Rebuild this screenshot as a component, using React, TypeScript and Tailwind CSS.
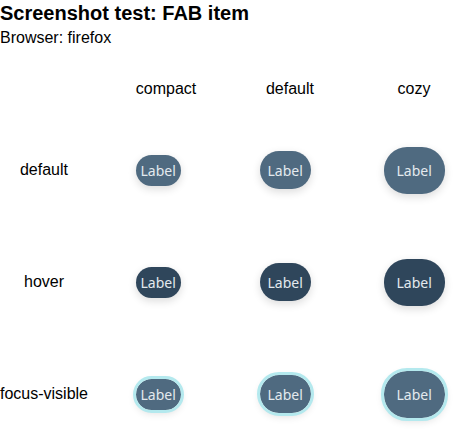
import React from "react";

type Size = "compact" | "default" | "cozy";
type State = "default" | "hover" | "focus-visible";

const sizeCls: Record<Size, string> = {
  compact: "h-[31px] px-[5px] rounded-full",
  default: "h-[38px] px-[8px] rounded-full",
  cozy: "h-[47px] px-[13px] rounded-[23px]",
};

function Fab({ size, state }: { size: Size; state: State }) {
  const bg = state === "hover" ? "bg-[#2f465b]" : "bg-[#4f6a80]";
  const ring =
    state === "focus-visible" ? "outline outline-[3px] outline-[#b4e9ee]" : "";
  return (
    <div
      className={`flex items-center justify-center ${sizeCls[size]} ${bg} ${ring} text-[14px] text-[#e3e9ee] shadow-[0_3px_8px_rgba(0,0,0,0.14)]`}
      style={{ fontFamily: '"Noto Sans", "Open Sans", sans-serif' }}
    >
      Label
    </div>
  );
}

const sizes: Size[] = ["compact", "default", "cozy"];
const states: State[] = ["default", "hover", "focus-visible"];

export default function App() {
  return (
    <div
      className="w-[463px] h-[434px] overflow-hidden bg-white text-black"
      style={{ fontFamily: '"Liberation Sans", Arial, sans-serif' }}
    >
      <div className="pt-[2px] text-[20px] leading-[23px] font-bold">
        Screenshot test: FAB item
      </div>
      <div className="mt-[4px] text-[16px] leading-[18px]">Browser: firefox</div>
      <div className="mt-[17px] grid grid-cols-[104px_124px_124px_124px] grid-rows-[50px_112px_112px_112px] w-[476px]">
        <div />
        {sizes.map((s) => (
          <div key={s} className="flex items-center justify-center text-[16px]">
            {s}
          </div>
        ))}
        {states.map((st) => (
          <React.Fragment key={st}>
            <div className="w-[88px] flex items-center justify-center text-[16px] whitespace-nowrap">
              {st}
            </div>
            {sizes.map((s) => (
              <div key={s} className="flex items-center justify-center">
                <div className="w-[61px] flex items-center justify-start">
                  <Fab size={s} state={st} />
                </div>
              </div>
            ))}
          </React.Fragment>
        ))}
      </div>
    </div>
  );
}
